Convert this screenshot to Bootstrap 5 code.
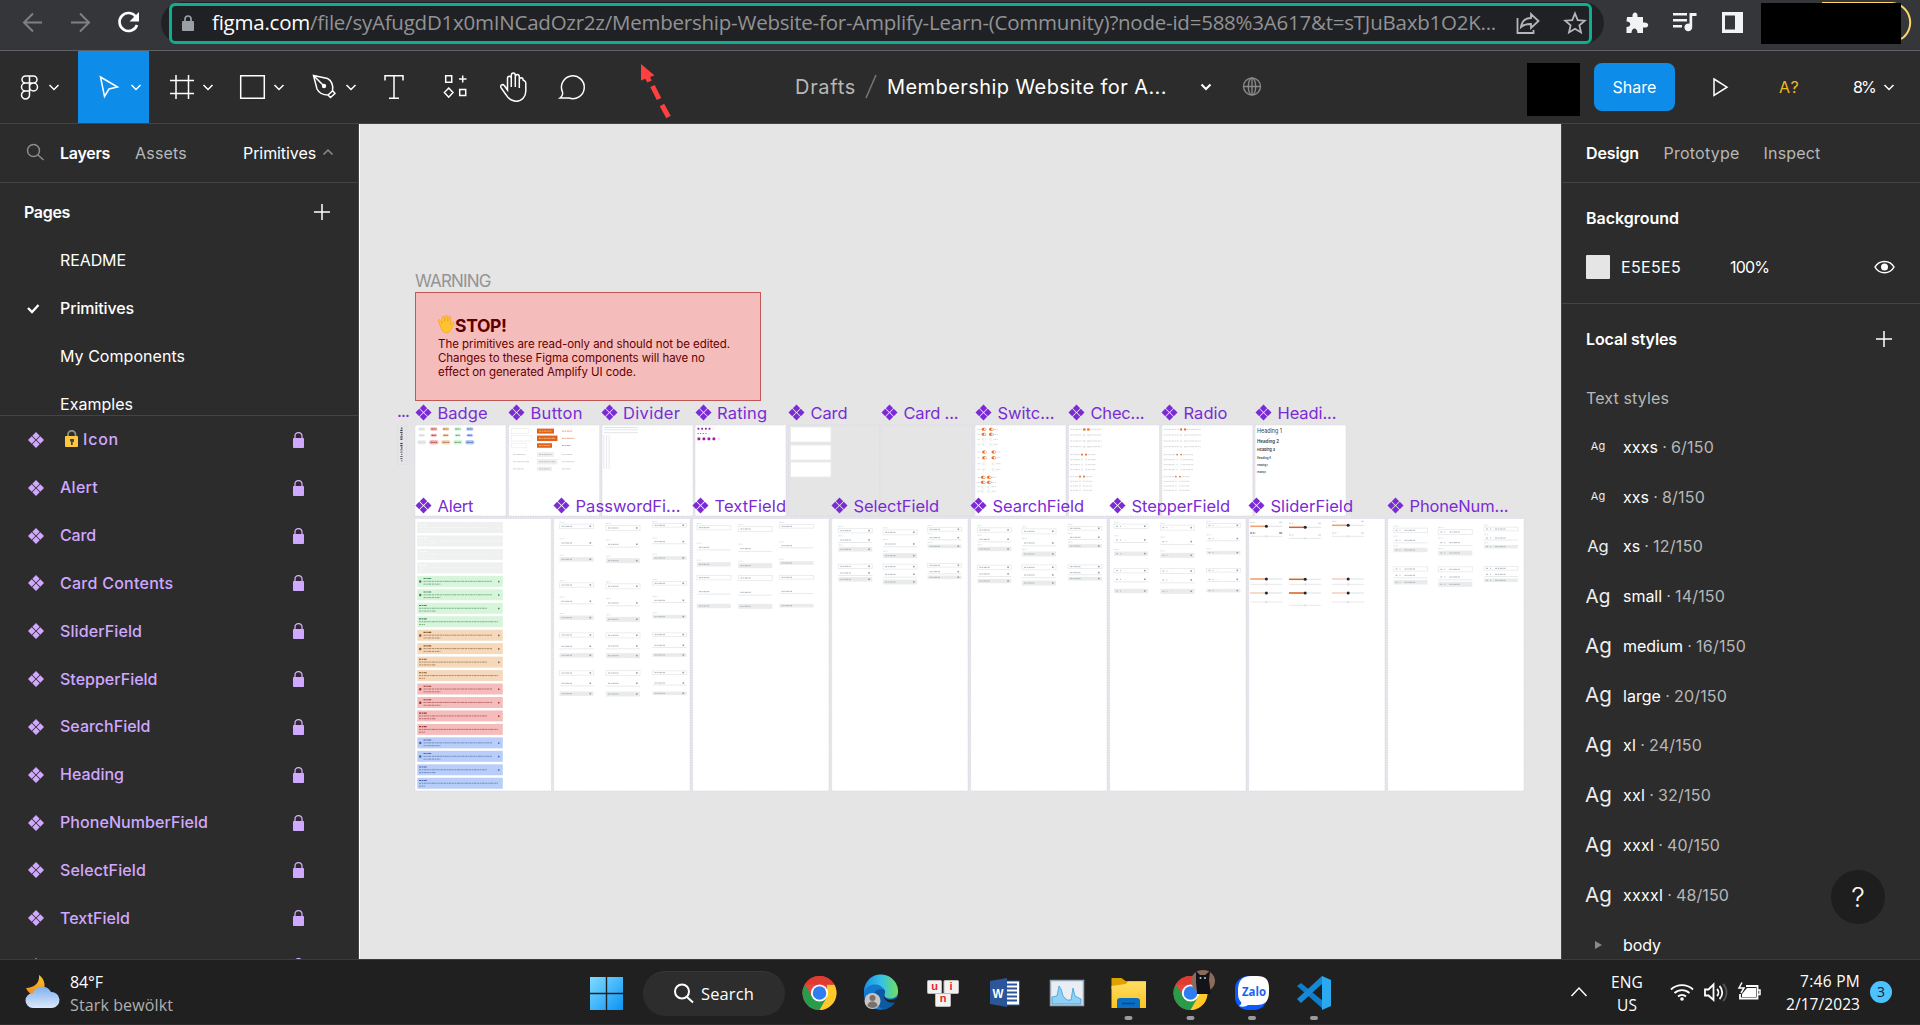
<!DOCTYPE html>
<html lang="en">
<head>
<meta charset="utf-8">
<title>Membership Website for Amplify</title>
<link href="https://cdn.jsdelivr.net/npm/bootstrap@5.3.0/dist/css/bootstrap.min.css" rel="stylesheet">
<style>
body{width:1920px;height:1025px;overflow:hidden;background:#2c2c2c;color:#fff;font-family:Inter,"Liberation Sans",sans-serif;font-size:16px;line-height:1}
svg{display:block;flex:none}
.seg{font-family:"Open Sans","Noto Sans",sans-serif}
.ln{fill:none;stroke:#fff;stroke-width:1.5}
.browser-bar{height:51px;background:#35363a;border-bottom:1px solid #5f6063;position:relative}
.addr{width:1443px;height:42px;margin:2px 0 0;border-radius:21px;background:#202124;padding:1px 12px 0 8px}
.addr-ring{width:1423px;height:41px;border:3px solid #0fae8e;border-radius:6px;padding-left:10px}
.addr-text{color:#919395;font-size:20.5px;margin-left:18px;line-height:30px;width:1299px;padding-bottom:3px}
.tools{height:73px;border-bottom:1px solid #444;position:relative}
.tools .picked{background:#0d8ce9}
.share-btn{background:#0d8ce9;border:0;border-radius:8px;width:81px;height:48px;color:#fff;font-size:16px;padding:0;margin-left:14px}
.redact{background:#000;width:53px;height:53px}
.work{height:835px}
.side-l{width:359px;border-right:1px solid #444}
.side-r{width:359px;border-left:1px solid #444;position:relative}
.side-head{height:59px;border-bottom:1px solid #444;padding-bottom:1px}
.stage{background:#e5e5e5;width:1202px;border-left:1px solid #fff;overflow:hidden}
.dim{color:#b8b8b8}
.pages-box{height:233px;border-bottom:1px solid #444}
.pg{height:48px;padding-left:60px}
.lay{height:47.83px;color:#d1a8ff;padding-left:28px;font-weight:500}
.lay .nm{margin-left:16px;width:233px;padding-bottom:1px}
.sty{height:49.78px;padding-left:23px}
.sty .ag{width:26px;text-align:center;color:#eee}
.help{position:absolute;left:269px;top:746px;width:54px;height:54px;border-radius:50%;background:#1e1e1e}
.taskbar{height:65px;background:#202020;border-top:1px solid #3c3c3c}
.find{width:142px;height:45px;border-radius:23px;background:#2d2d2d;border-top:1px solid #383838}
.note{width:22px;height:22px;border-radius:50%;background:#4cc2ff;color:#123;font-size:14px}
.over{position:absolute;pointer-events:none}
.nw{white-space:nowrap}
</style>
<script src="https://cdn.jsdelivr.net/npm/bootstrap@5.3.0/dist/js/bootstrap.bundle.min.js"></script>
</head>
<body>
<svg width="0" height="0" class="position-absolute">
<defs>
<g id="comp"><path d="M0-8L3.7-4.3 0-.6-3.7-4.3zM0 .6L3.7 4.3 0 8-3.7 4.3zM-8 0L-4.3-3.7-.6 0-4.3 3.7zM8 0L4.3-3.7.6 0 4.3 3.7z"/></g>
<g id="chrome"><circle r="17" fill="#e8453c"/><path d="M-14.7-8.5A17 17 0 0 0 1 17L8 3.5-7.5 3z" fill="#2a9b4a"/><path d="M14.9-8.2A17 17 0 0 1 0 17L7.5 4V-8.2z" fill="#ffc928"/><path d="M-14.7-8.5A17 17 0 0 1 14.8-8.5H0z" fill="#e03b30"/><circle r="8.6" fill="#fff"/><circle r="6.8" fill="#2f7df0"/></g>
<linearGradient id="win" x1="0" y1="0" x2="1" y2="1"><stop offset="0" stop-color="#7fdcff"/><stop offset="1" stop-color="#0a93f5"/></linearGradient>
<linearGradient id="cld" x1="0" y1="0" x2="0" y2="1"><stop offset="0" stop-color="#7fb0ef"/><stop offset="1" stop-color="#dbe8fb"/></linearGradient>
<linearGradient id="moon" x1="0" y1="0" x2="0" y2="1"><stop offset="0" stop-color="#fcc62e"/><stop offset="1" stop-color="#f08a1c"/></linearGradient>
<linearGradient id="edg" x1="0" y1="0" x2="1" y2="0"><stop offset="0" stop-color="#1a8fe0"/><stop offset=".5" stop-color="#35c1e8"/><stop offset="1" stop-color="#6fe05a"/></linearGradient>
<linearGradient id="fold" x1="0" y1="0" x2="0" y2="1"><stop offset="0" stop-color="#ffdd63"/><stop offset="1" stop-color="#fbc420"/></linearGradient>
</defs>
</svg>

<header class="browser-bar d-flex">
  <svg width="161" height="50" viewBox="0 0 161 50" fill="none" stroke-width="2">
    <path d="M42 22.500H25M33 13.500l-9 9 9 9" stroke="#7f8184"/><path d="M71 22.500h17M80 13.500l9 9-9 9" stroke="#7f8184"/>
    <path d="M136 17A9 9 0 1 0 137 25" stroke="#fff" stroke-width="2.600"/><path d="M139 12v9.500h-9.500z" fill="#fff"/>
  </svg>
  <div class="addr"><div class="addr-ring d-flex align-items-center">
    <svg width="12" height="17" viewBox="0 0 12 17"><rect y="6" width="12" height="10" rx="1" fill="#9aa0a6"/><path d="M3 7V4a3 3 0 0 1 6 0v3" fill="none" stroke="#9aa0a6" stroke-width="1.700"/></svg>
    <div class="addr-text seg nw flex-shrink-0"><span data-w="1284"><span class="text-white">figma.com</span>/file/syAfugdD1x0mINCadOzr2z/Membership-Website-for-Amplify-Learn-(Community)?node-id=588%3A617&amp;t=sTJuBaxb1O2K...</span></div>
    <svg width="78" height="36" viewBox="1513 6 78 36" fill="none" stroke="#b5b7ba" stroke-width="1.800"><path d="M1519.500 18v15h16v-3M1523 27c1-6 5-9 10-9v-4l7.500 7-7.500 7v-4c-5 0-8 1-10 3z"/><path d="M1577 13.500l2.700 6.600 7.100.6-5.400 4.700 1.600 7-6-3.700-6 3.700 1.600-7-5.400-4.700 7.100-.6z"/></svg>
  </div></div>
  <svg width="157" height="50" viewBox="1604 0 157 50" fill="#f1f3f4"><path d="M1627 17h5.500c-1-6 6-6 5 0h5.500v5.500c7-1 7 6 0 5v5.500h-5.500c0-6-6-6-6 0h-5v-6c5 0 5-5.500 0-5.500z"/><path d="M1673 13h14v2.400h-14zM1673 19h14v2.400h-14zM1673 25h9v2.400h-9zM1689.500 13h7v3h-4.300v11.500a3.900 3.900 0 1 1-2.700-3.800z"/><path d="M1722 12h21v21h-21zM1725 15.500v14h10v-14z" fill-rule="evenodd"/></svg>
  <svg width="159" height="50" viewBox="1761 0 159 50"><path d="M1822 3h70a19.500 19.500 0 0 1 9 36" fill="none" stroke="#fdd663" stroke-width="2"/><rect x="1761" y="3" width="140" height="41"/></svg>
</header>

<nav class="tools d-flex">
  <svg width="78" height="72" viewBox="0 51 78 72" class="ln"><path d="M25.500 76h4v7h-4a3.500 3.500 0 0 1 0-7zM29.500 76h4a3.500 3.500 0 0 1 0 7h-4zM25.500 83h4v8h-4a4 4 0 0 1 0-8zM29.500 87a4 4 0 1 0 8 0 4 4 0 1 0-8 0zM25.500 91h4v3.500a4 4 0 1 1-4-3.500z"/><path d="M49.500 85l4.500 4.500 4.500-4.500"/></svg>
  <svg width="71" height="72" viewBox="78 51 71 72" class="ln picked"><path d="M100.500 77l17 10-8.500 2-4.500 7.500z"/><path d="M131.500 85l4.500 4.500 4.500-4.500"/></svg>
  <svg width="72" height="72" viewBox="149 51 72 72" class="ln"><path d="M176 75v24M188.500 75v24M170 80.500h24M170 93.500h24M203.500 85l4.500 4.500 4.500-4.500"/></svg>
  <svg width="72" height="72" viewBox="221 51 72 72" class="ln"><path d="M240.700 75.700h23.600v22.600h-23.600zM274.500 85l4.500 4.500 4.500-4.500"/></svg>
  <svg width="72" height="72" viewBox="293 51 72 72" class="ln"><path d="M313.500 75.500l14 3c4 2 6 7 5 12l2.500 3-4.500 4-2.500-2.500c-5 0-9-2-11-6zM313.500 75.500l9.500 9.500M328 95l5-4.500M346.500 85l4.500 4.500 4.500-4.500"/><circle cx="324" cy="86" r="2.200" fill="#fff" stroke="none"/></svg>
  <svg width="58" height="72" viewBox="365 51 58 72" class="ln"><path d="M385 80.500v-4.800h18v4.800M394 76v22.300M389 98.300h10"/></svg>
  <svg width="65" height="72" viewBox="423 51 65 72" class="ln" stroke-linejoin="miter"><path d="M445.700 75.700h6v6.500h-6zM459.700 89.500h6v6h-6zM462.700 75.500v7M459 79h7.500M448.700 88l4.300 4.600-4.300 4.600-4.300-4.600z"/></svg>
  <svg width="50" height="72" viewBox="488 51 50 72" class="ln"><path d="M507.500 90V78.500c0-3 3.800-3 3.800 0V87v-11.500c0-3.500 4-3.500 4 0V87v-10c0-3.200 4-3.200 4 0v11-8c0-3 3.800-3 3.800 0l1.700 1c1.200 1 1 2 1 3v7c0 6-4 10.200-9.300 10.200-6 0-8.500-3-10.500-6.500l-5-7c-1-3 1.500-4 3.500-2z"/></svg>
  <svg width="68" height="72" viewBox="538 51 68 72" class="ln"><path d="M560 98c2.500-2 3-4 2.500-6A11.400 11.400 0 1 1 569 98z"/></svg>
  <div class="d-flex align-items-center nw" style="margin-left:189px;font-size:20px">
    <span class="dim" data-w="61">Drafts</span>
    <svg width="31" height="72" viewBox="857 51 31 72" fill="none" stroke="#777" stroke-width="1.500"><path d="M877 75l-10 23"/></svg>
    <span data-w="280">Membership Website for A...</span>
    <svg width="110" height="72" viewBox="1167 51 110 72" class="ln"><path d="M1201.500 84.500l4.500 4.500 4.500-4.500" stroke-width="2"/><g stroke="#888" stroke-width="1.400"><circle cx="1252" cy="86.500" r="8.500"/><ellipse cx="1252" cy="86.500" rx="3.700" ry="8.500"/><path d="M1243.500 86.500h17M1252 78v17"/></g></svg>
  </div>
  <div class="d-flex align-items-start pt-2 ms-auto">
    <div class="redact mt-1"></div>
    <button class="share-btn mt-1" type="button"><span data-w="44">Share</span></button>
  </div>
  <svg width="104" height="72" viewBox="1675 51 104 72" class="ln"><path d="M1714 79l13 8.200-13 8.200z"/></svg>
  <div class="d-flex align-items-center nw"><span data-w="21" style="color:#f2b91c">A?</span><span data-w="22" style="margin-left:53px">8%</span>
  <svg width="45" height="72" viewBox="1875 51 45 72" class="ln"><path d="M1884.500 85l4.500 4.500 4.500-4.500"/></svg></div>
  <svg class="over" width="40" height="64" viewBox="635 60 40 64" style="left:635px;top:9px" fill="none" stroke="#ff4040" stroke-width="5"><path d="M641 64l13.500 11.500-6 2-7.500 3z" fill="#ff4040" stroke="none"/><path d="M645.500 73.500l4 8M652.500 86l6.500 13M662 105l6.500 12"/></svg>
</nav>

<main class="work d-flex">
  <aside class="side-l d-flex flex-column overflow-hidden flex-shrink-0">
    <div class="side-head d-flex align-items-center nw">
      <svg width="60" height="58" viewBox="0 124 60 58" fill="none" stroke="#8c8c8c" stroke-width="1.500"><circle cx="33.500" cy="150.500" r="6"/><path d="M38 155l5.500 5"/></svg>
      <span class="fw-semibold" data-w="50">Layers</span><span class="dim" data-w="52" style="margin-left:25px">Assets</span>
      <span data-w="73" style="margin-left:56px">Primitives</span>
      <svg width="24" height="58" viewBox="317 124 24 58" fill="none" stroke="#8c8c8c" stroke-width="1.500"><path d="M324.500 154.500l4.500-4.500 4.500 4.500"/></svg>
    </div>
    <div class="pages-box overflow-hidden flex-shrink-0">
      <div class="d-flex align-items-center justify-content-between" style="height:53px;padding:5px 27px 0 24px"><span class="fw-semibold" data-w="46">Pages</span><svg width="18" height="18" class="ln"><path d="M9 1v16M1 9h16"/></svg></div>
      <div class="pg d-flex align-items-center"><span data-w="66">README</span></div>
      <div class="pg d-flex align-items-center ps-0"><svg width="60" height="48" viewBox="0 284 60 48" fill="none" stroke="#fff" stroke-width="2.300"><path d="M28 308l4 4 6.500-7"/></svg><span data-w="74" style="font-weight:500">Primitives</span></div>
      <div class="pg d-flex align-items-center"><span data-w="125">My Components</span></div>
      <div class="pg d-flex align-items-center"><span data-w="73">Examples</span></div>
    </div>
    <div id="layers"></div>
  </aside>

  <section class="stage flex-shrink-0"><svg id="board" width="1201" height="835" viewBox="360 124 1201 835" font-family="Inter, sans-serif"></svg></section>

  <aside class="side-r overflow-hidden flex-shrink-0">
    <div class="side-head d-flex align-items-center nw" style="padding-left:24px">
      <span class="fw-semibold" data-w="53">Design</span><span class="dim" data-w="76" style="margin-left:24.500px">Prototype</span><span class="dim" data-w="57" style="margin-left:24px">Inspect</span>
    </div>
    <div style="height:121px;padding:26px 25px 0 24px;border-bottom:1px solid #444">
      <div class="fw-semibold" style="height:46px;line-height:19px"><span data-w="93">Background</span></div>
      <div class="d-flex align-items-center" style="height:24px"><i class="d-block" style="width:24px;height:24px;background:#e5e5e5;border-radius:1px"></i><span data-w="60" style="margin-left:11px">E5E5E5</span><span data-w="39" style="margin-left:49px">100%</span>
      <svg class="ms-auto" width="21" height="16" viewBox="0 0 21 16"><path d="M1 8c4-7.500 15-7.500 19 0-4 7.500-15 7.500-19 0z" class="ln"/><circle cx="10.500" cy="8" r="3.500" fill="#fff"/></svg></div>
    </div>
    <div class="d-flex align-items-center justify-content-between" style="height:71px;padding:0 27px 1px 24px"><span class="fw-semibold" data-w="91">Local styles</span><svg width="18" height="18" class="ln"><path d="M9 1v16M1 9h16"/></svg></div>
    <div class="dim" style="padding:15px 0 0 24px;height:47px"><span data-w="83">Text styles</span></div>
    <div id="styles"></div>
    <div class="help d-flex align-items-center justify-content-center" style="font-size:27px;font-weight:300">?</div>
  </aside>
</main>

<footer class="taskbar d-flex seg">
  <svg width="70" height="64" viewBox="0 960 70 64"><path d="M39 975c6 4 8 13 2 18-5 4-12 2-15-5 8 0 14-5 13-13z" fill="url(#moon)"/><path d="M33 1008a7.500 7.500 0 0 1 0-15 10 10 0 0 1 18-1 8 8 0 0 1 1 16z" fill="url(#cld)"/></svg>
  <div class="d-flex flex-column nw" style="width:508px;padding-top:11px;font-size:16px;line-height:23px"><div><span data-w="33">84°F</span></div><div style="color:#b0b0b0"><span data-w="103">Stark bewölkt</span></div></div>
  <svg width="65" height="64" viewBox="578 960 65 64" fill="url(#win)"><path d="M590 977h15.800v15.800H590zM607.200 977H623v15.800h-15.800zM590 994.200h15.800V1010H590zM607.200 994.200H623V1010h-15.800z"/></svg>
  <div class="find d-flex align-items-center" style="margin-top:11px"><svg width="58" height="44" viewBox="642 971 58 44" fill="none" stroke="#fff" stroke-width="2"><circle cx="681" cy="990.500" r="7"/><path d="M686 996l6 5.500"/></svg><span data-w="53" style="font-size:16.500px">Search</span></div>
  <svg width="770" height="64" viewBox="785 960 770 64">
    <use href="#chrome" x="819.500" y="993"/>
    <circle cx="881" cy="993" r="17" fill="#0c59a4"/><path d="M864 993a17 17 0 0 1 34-3c1 7-5 10-11 8-3-1-3-3-2-5 1-4-3-6-7-5-6 1-7 7-5 12 1 3 3 5 5 7-9-2-14-7-14-14z" fill="url(#edg)"/><path d="M885 993c-2 3 0 7 5 7 4 0 7-2 9-3l-2 5c-8 3-16-3-12-9z" fill="#202020"/><path d="M864 992c4-9 16-10 20-2-7-3-12 3-10 9 1 4 4 8 9 10-11 2-20-7-19-17z" fill="#1279cf"/><circle cx="872.500" cy="1001" r="8" fill="#c9c5c2"/><circle cx="872.500" cy="998" r="3" fill="#77706c"/><path d="M867.500 1006c0-6 10-6 10 0a8 8 0 0 1-10 0z" fill="#77706c"/>
    <g fill="#f3f1f1" stroke="#bbb"><rect x="927.500" y="980.500" width="14" height="13" rx="1"/><rect x="944" y="980.500" width="14.500" height="13" rx="1"/><rect x="935.500" y="993.500" width="15" height="13" rx="1"/></g><g fill="#e8252b" font-family="Liberation Sans" font-weight="700" font-size="11" text-anchor="middle"><text x="934.500" y="990">u</text><text x="951" y="990">i</text><text x="943" y="1002">n</text></g>
    <path d="M1005 981h14.500v24H1005z" fill="#fff" stroke="#2b579a"/><path d="M1006 984.500h11M1006 988.500h11M1006 992.500h11M1006 996.500h11M1006 1000.500h11" stroke="#2b579a" stroke-width="1.800"/><path d="M990 981l17-3v29l-17-3z" fill="#2b579a"/><text x="998" y="998" fill="#fff" font-family="Liberation Sans" font-weight="700" font-size="13" text-anchor="middle" textLength="11" lengthAdjust="spacingAndGlyphs">W</text>
    <path d="M1050.500 980.500h33v25h-33z" fill="#e8eef4" stroke="#9aa7b4" stroke-width="1.500"/><path d="M1052 1004v-7l5-1 2-10 2 3 2 7 4 4h4l2-12 2 8 6 3v5z" fill="#8fd0f5" stroke="#3b9ddb" stroke-width=".8"/>
    <path d="M1111.500 978h10l4 3h20.500v8h-34.500z" fill="#e0a100"/><path d="M1111.500 986l14-2 3-2.500h17.500V1008h-34.500z" fill="url(#fold)"/><path d="M1117 1008v-7a3 3 0 0 1 3-3h17a3 3 0 0 1 3 3v7z" fill="#0a6fc4"/><path d="M1122 1003.500h13" stroke="#064a86" stroke-width="1.500"/>
    <use href="#chrome" x="1190.500" y="993"/><ellipse cx="1203" cy="981" rx="12" ry="11" fill="#8b6b5a"/><path d="M1196 971l4 4h5l5-4-1 9 2 14h-14l-1-12z" fill="#15131a"/><circle cx="1200.500" cy="978" r="1" fill="#9fd8d0"/><circle cx="1205" cy="978" r="1" fill="#9fd8d0"/>
    <rect x="1235" y="976" width="32" height="34" rx="13" fill="#0a5cff"/><path d="M1251 976h6c9 0 12 4 12 12v4c0 9-4 13-12 13h-9c-3 2-6 2-9 1 2-1 3-3 2-4-3-3-3-7-3-11 0-10 4-15 13-15z" fill="#fff"/><text x="1242" y="996" fill="#1565f0" font-family="Open Sans" font-weight="700" font-size="11.500" textLength="24" lengthAdjust="spacingAndGlyphs">Zalo</text>
    <path d="M1297 986l4-3 22 18v8z" fill="#0f7dc9"/><path d="M1297 999l4 4 22-20-1-7z" fill="#1589d6"/><path d="M1322 976l9 4v26l-9 4z" fill="#2aa9f0"/>
    <g fill="#9a9a9a"><rect x="1124.500" y="1016" width="8" height="4" rx="2"/><rect x="1186.500" y="1016" width="8" height="4" rx="2"/><rect x="1248" y="1016" width="8" height="4" rx="2"/><rect x="1310" y="1016" width="8" height="4" rx="2"/></g>
  </svg>
  <svg width="46" height="64" viewBox="1555 960 46 64" class="ln"><path d="M1571.500 996l7.500-8 7.500 8"/></svg>
  <div class="text-center nw" style="width:52px;padding-top:11px;font-size:15.500px;line-height:23px"><div><span data-w="32">ENG</span></div><div><span data-w="20">US</span></div></div>
  <svg width="117" height="64" viewBox="1653 960 117 64" fill="none" stroke="#fff" stroke-width="1.800"><path d="M1671 989.500a16 16 0 0 1 22 0M1674.500 993a11 11 0 0 1 15 0M1678 996.500a6 6 0 0 1 8 0"/><circle cx="1682" cy="999" r="1.800" fill="#fff" stroke="none"/><path d="M1705 989.500h3.500l5-5v15.500l-5-4.500h-3.500zM1717 989a5 5 0 0 1 0 7M1719.500 986a9 9 0 0 1 0 13"/><path d="M1723 984a12 12 0 0 1 0 17" stroke="#555"/><path d="M1746 986h11.500v12.500H1740V994"/><path d="M1747 988h9v9h-14v-3z" fill="#fff" stroke="none"/><path d="M1758 990h2v4.500h-2M1742 982.500l-3 5.500h5l-3 5" stroke-width="1.500"/></svg>
  <div class="text-end nw" style="width:90px;padding-top:10px;font-size:15.500px;line-height:23px"><div><span data-w="60">7:46 PM</span></div><div><span data-w="74">2/17/2023</span></div></div>
  <div class="d-flex align-items-center" style="margin-left:10px;height:63px"><div class="note d-flex align-items-center justify-content-center">3</div></div>
</footer>

<script>
/* layer rows */
const names=["Icon","Alert","Card","Card Contents","SliderField","StepperField","SearchField","Heading","PhoneNumberField","SelectField","TextField",""];
const nameW=[36,38,36,113.5,82,97.5,90.5,64,148,86,70,0];
document.getElementById("layers").innerHTML=names.map((n,i)=>`<div class="lay d-flex align-items-center"><svg width="16" height="16" viewBox="-8 -8 16 16" fill="#d1a8ff"><use href="#comp"/></svg><div class="nm d-flex align-items-center">${i?"":'<svg width="23" height="18" viewBox="0 0 23 18"><path d="M8 7V4.500a3.700 3.700 0 0 1 7.500 0V7" fill="none" stroke="#8d8d8d" stroke-width="1.800"/><rect x="5" y="6" width="13" height="11" rx="1" fill="#ffc83d"/><path d="M10 9h4v3h-1.300v3h-1.700v-3.500H10z" fill="#4a4150"/></svg>'}<span data-w="${nameW[i]}">${n}</span></div><svg width="11" height="16" viewBox="0 0 11 16"><rect y="6" width="11" height="10" rx=".8" fill="#d1a8ff"/><path d="M2 7V4a3.500 3.500 0 0 1 7 0v3" fill="none" stroke="#d1a8ff" stroke-width="1.300"/></svg></div>`).join("");

/* text styles */
const sty=[["xxxs","6/150",11,35,43],["xxs","8/150",11,26,43],["xs","12/150",16.5,17,50],["small","14/150",19,39,50],["medium","16/150",20.5,60,50],["large","20/150",20.5,38,53],["xl","24/150",20.5,13,53],["xxl","32/150",20.5,22,53],["xxxl","40/150",20.5,31,53],["xxxxl","48/150",20.5,40,53]];
document.getElementById("styles").innerHTML=sty.map(s=>`<div class="sty d-flex align-items-center"><span class="ag" style="font-size:${s[2]}px">Ag</span><span data-w="${s[3]}" style="margin-left:12px">${s[0]}</span><span class="dim text-center" style="width:13px">·</span><span class="dim" data-w="${s[4]}">${s[1]}</span></div>`).join("")+`<div class="sty d-flex align-items-center"><svg width="38" height="10"><path d="M10 1l7 4-7 4z" fill="#8a8a8a"/></svg><span data-w="38">body</span></div>`;

/* board */
let o="";
const R=(x,y,w,h,f,e="")=>o+=`<rect x="${x}" y="${y}" width="${w}" height="${h}" fill="${f}" ${e}/>`;
const L=(x1,x2,y,c,w=1,e="")=>o+=`<path d="M${x1} ${y}H${x2}" stroke="${c}" stroke-width="${w}" ${e}/>`;
const T=(x,y,w,s,f,t,e="")=>o+=`<text x="${x}" y="${y}" ${w?`textLength="${w}"`:""} font-size="${s}" fill="${f}" ${e}>${t}</text>`;
const dots='stroke-dasharray="2.2 .6 1.4 .5 3 .6"';
const edge='stroke="#d9d6ee" stroke-width=".8" stroke-dasharray="1.5 1"';
T(415,286.500,76.500,17,"#949494","WARNING");
R(415.5,292.5,345,108,"#f5bcbc",'stroke="#c25757"');
o+=`<path d="M441 328l-2.500-7c-.5-2 1.500-2 2-.5l1.500 3v-6c0-1.800 2-1.800 2.300 0l.5 4 .3-5c0-1.800 2.300-1.800 2.400 0l.3 5 .8-4c.3-1.700 2.400-1.500 2.200.3l-.4 7 1.500-2c1.200-1.500 3 0 2 1.500l-3 5.500c-2 4.500-8 4.500-9.900-1.800z" fill="#ffc32e" stroke="#e89a1c" stroke-width=".5"/>`;
T(455,331.5,52,17.5,"#600000","STOP!",'font-weight="700"');
T(438,348,292,11.5,"#660000","The primitives are read-only and should not be edited.");
T(438,362,267,11.5,"#660000","Changes to these Figma components will have no");
T(438,375.500,198,11.5,"#660000","effect on generated Amplify UI code.");
R(397.5,425.5,9,39,"none",edge);
for(let i=0;i<16;i++) if(i!=6) R(i%3?400.3:401,427.5+i*2.2,i%3?2.3:1.4,i>9?.8:1.3,"#3a4350");
/* first row frames */
[415,508.7,602,695,788.7,881.7,975,1068.500,1161.800,1255].forEach((x,i)=>R(x,425,91,91,i==4||i==5?"none":"#fff",edge));
[415,553.700,692.700,831.700,970.700,1109.700,1248.700,1387.700].forEach(x=>R(x,518.500,136.300,272.500,"#fff",edge));
/* badge */
const bc=[["#eeeeee","#ccc"],["#f5bcbc","#a33"],["#f5d9bc","#96603a"],["#d6f5db","#5c9468"],["#b8cef9","#3f62b0"]];
[[429,7.5,3.7],[435.3,6.500,3],[442.3,9.500,4.500]].forEach(r=>bc.forEach((c,i)=>{const x=421.8+i*12;R(x-r[1]/2,r[0]-r[2]/2,r[1],r[2],c[0],`rx="${r[2]/2}"`);L(x-r[1]/3,x+r[1]/3,r[0],c[1],1,dots)}));
/* button */
[[431.1,17,5],[438.300,20.500,5.500],[445.500,15,4.500]].forEach((b,i)=>{const y=b[0];R(511.300,y-b[2]/2,b[1],b[2],"#fff",'stroke="#eceef0" stroke-width=".8"');R(537,y-b[2]/2,b[1],b[2],"#e0631a");L(539,535+b[1],y,"#f5b080",1,dots);L(562,562+b[1]*.6,y,"#f0a070",1,dots);
 const z=y+23.400;L(513,511+b[1]-2,z,"#cfd2d4",1,dots);R(537,z-b[2]/2,b[1],b[2],"#eeefef");L(539,535+b[1],z,"#c4c4c4",1,dots);L(562,562+b[1]*.6,z,"#cfd2d4",1,dots)});
/* divider */
[427.500,429.800,432.700].forEach(y=>L(604,638,y,"#e2e4e6"));[603.500,606.300,608.700].forEach(x=>R(x,435,.8,34,"#e2e4e6"));
/* rating */
[[428.700,3.700,1.900],[433.500,2.600,1.200],[438.800,5,2.800]].forEach(r=>{for(let i=0;i<5;i++)R(697.500+i*r[1],r[0]-r[2]/2,r[2],r[2],i<4?"#9b1fa0":"#eee",'rx=".6"')});
/* card */
[427,445,462].forEach(y=>R(790.500,y,40.500,15,"#fff",'stroke="#ececec"'));
/* switches */
[[118,1,205,223],[133,1,205,223],[148,0,205,223],[163,0,205,223],[186,1,206,229],[203,1,206,229],[221,0,206,229],[239,0,206,229],[262,1,203,218],[277,1,203,218],[290,0,203,218],[304,0,203,218]].forEach(r=>{const y=390+r[0]/3;[2,3].forEach(k=>{const x=900+r[k]/2.45;R(x-2,y-1.500,4.500,3,r[1]?"#e8702a":"#eceeef",'rx="1.500"');R(x+.2,y-1,2,2,"#fff",'rx="1"');});L(977.500,980.500,y,"#d8dadc",1,dots);L(900+r[3]/2.45+3,900+r[3]/2.45+7,y,"#d8dadc",1,dots)});
/* check boxes and radios */
[[417,[77,63,54],[450,445,440]],[646,[91,72,64],[687,678,675]]].forEach((c,q)=>[118,135,153,170,194,209,224,239,260,274,288,301].forEach((p,i)=>{const y=390+p/3,g=i>>2,x=900+c[0]/2.45,w=c[1][g]/2.45,m=900+c[2][g]/2.45;L(x,m-1.500,y,"#d6d9dc",1,dots);L(m+6,x+w,y,"#d6d9dc",1,dots);[0,4].forEach(d=>R(m+d-.5,y-1,g?1.800:2.300,g?1.800:2.300,i%4?"#e6e8ea":"#e8702a",q?'rx="1.200"':""))}));
/* headings */
[[432.700,25,5.700],[442.500,22,5],[451,18,4],[458.500,14,3.200],[466,11,2.700],[472.500,9,2.300]].forEach((h,i)=>T(1257,h[0],h[1],h[2],"#304050",`Heading ${i+1}`,'lengthAdjust="spacingAndGlyphs"'+(i?' font-weight="600"':"")));
/* alerts */
const ac=[["#eff0f0","#fafafa"],["#d6f5db","#4d8a5c"],["#f5d9bc","#8a5a2a"],["#f5bcbc","#9a3a3a"],["#b8cef9","#4a66a8"]];
for(let i=0;i<20;i++){const y=522+i*13.460,c=ac[i>>2],ic=i%4<2&&i>3,x=ic?423.500:419,s=dots+' opacity=".6"';R(417.300,y,85.500,11,c[0]);L(x,x+8,y+2.700,c[1],1.100,dots);L(x,ic?492:i%2?498:487,y+5.500,c[1],1,s);L(x,i%4==3?x+6:x+17,y+8.300,c[1],1,s);if(ic)R(419,y+4.500,2.500,2.500,c[1],'rx="1"');if(i%4!=3)R(498,y+5,1.500,1.500,c[1])}
/* form fields: columns, row centres, first group labels, trailing glyph */
const K="oufoufoufouf";
function fields(cols,w,rows,labels,trail,pre){cols.forEach((x,ci)=>rows[ci].forEach((y,i)=>{const t=K[i],h=ci==1?5:ci==2?3.600:4.400;
 if(t=="o")R(x,y-h/2,w,h,"#fff",'stroke="#e9ebed" stroke-width=".9"');
 if(t=="f")R(x,y-h/2,w,h,"#e9ebec");
 if(t=="u")L(x,x+w,y+h/2+.3,"#e6e8ea",.9);
 const s=pre?x+11:x+2;L(s,s+(pre==2?0:11),y,"#b4b8bd",1,dots);
 if(pre)L(x+2,x+7,y,"#b4b8bd",1,'stroke-dasharray="2 2"');
 if(trail)R(x+w-4,y-.8,1.600,1.500,"#969ba2");
 if(i<labels)L(x,x+5,y-h/2-2,"#dde0e3",1,dots)}))}
const c8=a=>a.map(v=>510+v/3),c7=a=>a.map(v=>390+v/3);
fields([559.500,606,652.500],34,[c8([49,99,148,225,274,323,375,409,436,489,520,551]),c8([54,103,152,229,279,328,376,408,437,489,520,552]),c8([46,95,144,220,271,320,374,406,435,488,519,550])],6,1,0);
fields([696.800,738.300,779.500],34,[c8([53,112,163,203,245,288]),c8([57,116,167,204,247,289]),c8([49,107,159,202,244,287])],3,0,0);
fields([838.300,883,927.500],34,[c7([422,450,478,529,549,568]),c7([427,462,497,530,553,576]),c7([418,443,469,526,545,562])],3,1,0);
fields([977.300,1022,1068],34,[c7([420,448,477,532,552,573]),c7([424,459,492,532,555,579]),c7([415,442,468,530,548,566])],3,1,0);
fields([1114,1160.400,1206.500],34,[c7([409,450,491,542,568,603]),c7([413,455,496,543,570,604]),c7([406,446,488,541,568,602])],3,1,2);
fields([1393.500,1438.300,1484],34,[c7([421,451,480,537,556,577]),c7([426,458,489,538,561,583]),c7([417,444,470,535,553,571])],3,0,1);
/* sliders */
[[1250.200,409,439],[1289,412,445],[1332,406,439]].forEach((s,i)=>{const x=s[0],op=v=>i==1?"#e0631a":v;
 [[s[1],"#f0a070"],[567+(i==1?1:0),i==2?"#fad5bd":"#f0a070"],[609,"#fad5bd"]].forEach(r=>{const y=390+r[0]/3;L(x,x+32,y,"#e6e8ea",1.300);L(x,x+16,y,op(r[1]),1.500);R(x+14.700,y-1.500,3,3,"#1d2733",'rx="1.500"')});
 [s[2],583,i==1?646:636].forEach(v=>{const y=390+v/3;L(x,x+32,y,"#e6e8ea",1);R(x+15,y-1.200,2.400,2.400,"#e0e3e6",'rx="1.200"')});
 [s[1]-12,s[2]-10].forEach((v,k)=>{L(x,x+5,390+v/3,k&&!i?"#555":"#cdd0d4",1,dots);L(x+29,x+32,390+v/3,k&&!i?"#555":"#cdd0d4",1)})});
/* labels */
const lab=(y,a)=>a.forEach(l=>{o+=`<use href="#comp" transform="translate(${l[0]+7.5} ${y-6})" fill="#7b2bd6"/>`;T(l[1]-.5,y,l[2]+1,16.500,"#7b2bd6",l[3])});
T(397,417,13,17,"#7b2bd6","...");
lab(418.500,[[416,438,49,"Badge"],[509,531,51,"Button"],[602,623.500,56,"Divider"],[696,717.500,49,"Rating"],[789,811,36,"Card"],[882,904,54,"Card ..."],[976,998,56,"Switc..."],[1069,1091,53,"Chec..."],[1162,1184,43,"Radio"],[1256,1278,58,"Headi..."]]);
lab(511.500,[[416,438,35,"Alert"],[554,576,104,"PasswordFi..."],[693,715,70.500,"TextField"],[832,854,84.500,"SelectField"],[971,993,90.500,"SearchField"],[1110,1132,97.500,"StepperField"],[1249,1271,81.500,"SliderField"],[1388,1410,98,"PhoneNum..."]]);
document.getElementById("board").innerHTML=o;

document.querySelectorAll("[data-w]").forEach(e=>{const n=e.textContent.length,w=+e.dataset.w;if(!n)return;e.style.whiteSpace="nowrap";const d=(w-e.getBoundingClientRect().width)/n;e.style.letterSpacing=d.toFixed(3)+"px"});
</script>
</body>
</html>
